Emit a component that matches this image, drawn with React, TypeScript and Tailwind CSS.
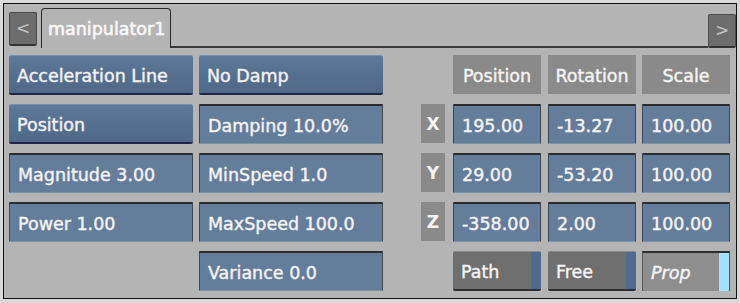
const font = { fontFamily: '"DejaVu Sans", "Liberation Sans", sans-serif' };

const raised =
  "bg-gradient-to-b from-[#5d7898] to-[#4f6888] border-t border-t-[#7990ad] border-b-2 border-b-[#20264a] rounded-[2px]";
const inset =
  "bg-[#647d9a] border-t-2 border-t-[#2c2c2c] border-x border-x-[#3c4756] border-b border-b-[#7e92a8] rounded-[1px]";

function Field({ label, sel, w = "w-[184px]", className = "" }: { label: string; sel?: boolean; w?: string; className?: string }) {
  return (
    <div className={`${w} h-[40px] ${sel ? raised : inset} flex items-center pl-[8px] pt-[3px] text-[17.5px] text-[#f4f4f4] ${className}`}>
      {label}
    </div>
  );
}

function Header({ label, className = "" }: { label: string; className?: string }) {
  return (
    <div className={`w-[88px] h-[39px] bg-[#8a8a8a] flex items-center justify-center pt-[3px] text-[17.5px] text-[#f4f4f4] ${className}`}>
      {label}
    </div>
  );
}

function Axis({ label }: { label: string }) {
  return (
    <div className="ml-[38px] w-[24px] h-[39px] bg-[#8a8a8a] flex items-center justify-center pt-[3px] text-[17px] font-bold text-[#f4f4f4] [-webkit-text-stroke:0px]">
      {label}
    </div>
  );
}

function ModeButton({ label, active, className = "" }: { label: string; active?: boolean; className?: string }) {
  if (active) {
    return (
      <div className={`w-[88px] h-[40px] flex bg-[#8e8e8e] border-t-2 border-t-[#2c2c2c] border-x border-x-[#555] ${className}`}>
        <div className="flex-1 flex items-center pl-[8px] pt-[3px] text-[17.5px] italic text-[#f4f4f4]">{label}</div>
        <div className="w-[10px] bg-[#a2e1ff]" />
      </div>
    );
  }
  return (
    <div className={`w-[88px] h-[40px] flex bg-[#6f6f6f] border-t border-t-[#8a8a8a] border-b-2 border-b-[#2e2e2e] rounded-[2px] ${className}`}>
      <div className="flex-1 flex items-center pl-[8px] pt-[3px] text-[17.5px] text-[#f4f4f4]">{label}</div>
      <div className="w-[10px] bg-[#4f6b8e]" />
    </div>
  );
}

export default function App() {
  return (
    <div className="w-[740px] h-[303px] bg-[#d9d9d9] p-[3px] [-webkit-text-stroke:0.4px_currentColor]" style={font}>
      <div className="h-[296px] border border-[#111] bg-[#b4b4b4] flex flex-col">
        {/* tab strip */}
        <div className="h-[44px] pt-[4px] flex items-end pl-[5px] pr-0">
          <div className="w-[28px] h-[34px] mb-[2px] bg-[#6d6d6d] border border-[#4a4a4a] border-b-2 border-b-[#333] rounded-[2px] flex items-center justify-center text-[17px] text-[#c4c4c4] [-webkit-text-stroke:0px]">
            &lt;
          </div>
          <div className="ml-[4px] w-[130px] h-[40px] border border-b-0 border-[#2a2a2a] rounded-t-[4px] bg-[#b4b4b4] flex items-center pl-[6px] pt-[2px] text-[17.5px] text-[#f8f8f8] [-webkit-text-stroke:0.6px_#f8f8f8]">
            manipulator1
          </div>
          <div className="flex-1 h-full border-b-2 border-b-[#3a3a3a]" />
          <div className="w-[28px] h-[34px] bg-[#6d6d6d] border border-[#4a4a4a] border-b-2 border-b-[#333] rounded-[2px] flex items-center justify-center text-[17px] text-[#c4c4c4] [-webkit-text-stroke:0px]">
            &gt;
          </div>
        </div>

        {/* rows */}
        <div className="pt-[7px] pl-[5px] flex flex-col gap-[9px]">
          <div className="flex">
            <Field label="Acceleration Line" sel />
            <Field label="No Damp" sel className="ml-[6px]" />
            <Header label="Position" className="ml-[70px]" />
            <Header label="Rotation" className="ml-[7px]" />
            <Header label="Scale" className="ml-[6px]" />
          </div>
          <div className="flex">
            <Field label="Position" sel />
            <Field label="Damping 10.0%" className="ml-[6px]" />
            <Axis label="X" />
            <Field label="195.00" w="w-[88px]" className="ml-[8px]" />
            <Field label="-13.27" w="w-[88px]" className="ml-[7px]" />
            <Field label="100.00" w="w-[88px]" className="ml-[6px]" />
          </div>
          <div className="flex">
            <Field label="Magnitude 3.00" />
            <Field label="MinSpeed 1.0" className="ml-[6px]" />
            <Axis label="Y" />
            <Field label="29.00" w="w-[88px]" className="ml-[8px]" />
            <Field label="-53.20" w="w-[88px]" className="ml-[7px]" />
            <Field label="100.00" w="w-[88px]" className="ml-[6px]" />
          </div>
          <div className="flex">
            <Field label="Power 1.00" />
            <Field label="MaxSpeed 100.0" className="ml-[6px]" />
            <Axis label="Z" />
            <Field label="-358.00" w="w-[88px]" className="ml-[8px]" />
            <Field label="2.00" w="w-[88px]" className="ml-[7px]" />
            <Field label="100.00" w="w-[88px]" className="ml-[6px]" />
          </div>
          <div className="flex">
            <div className="w-[184px]" />
            <Field label="Variance 0.0" className="ml-[6px]" />
            <ModeButton label="Path" className="ml-[70px]" />
            <ModeButton label="Free" className="ml-[7px]" />
            <ModeButton label="Prop" active className="ml-[6px]" />
          </div>
        </div>
      </div>
    </div>
  );
}
